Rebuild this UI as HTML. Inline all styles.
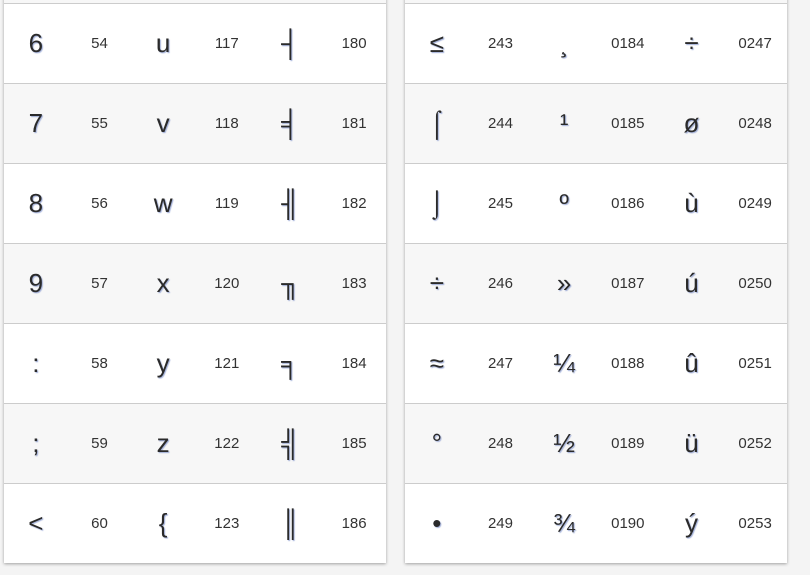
<!DOCTYPE html>
<html><head><style>
html,body{margin:0;padding:0;background:#f4f4f4;width:810px;height:575px;overflow:hidden;font-family:"Liberation Sans",Arial,sans-serif;}
.card{position:absolute;top:-77px;width:382px;background:#fff;box-shadow:0 1px 3px rgba(0,0,0,.35);}
.row{height:79px;border-top:1px solid #ccc;display:flex;}
.row:nth-child(odd){background:#f7f7f7;}
.c{width:63.66px;display:flex;align-items:center;justify-content:center;color:#333;}
.b{font-size:26px;color:#2a2a2a;text-shadow:1px 1px 1px rgba(120,140,200,.7);}
.n{font-size:15px;color:#333;}
</style></head><body>
<div class="card" style="left:4px">
<div class="row"></div>
<div class="row"><div class="c b">6</div><div class="c n">54</div><div class="c b">u</div><div class="c n">117</div><div class="c b">┤</div><div class="c n">180</div></div>
<div class="row"><div class="c b">7</div><div class="c n">55</div><div class="c b">v</div><div class="c n">118</div><div class="c b">╡</div><div class="c n">181</div></div>
<div class="row"><div class="c b">8</div><div class="c n">56</div><div class="c b">w</div><div class="c n">119</div><div class="c b">╢</div><div class="c n">182</div></div>
<div class="row"><div class="c b">9</div><div class="c n">57</div><div class="c b">x</div><div class="c n">120</div><div class="c b">╖</div><div class="c n">183</div></div>
<div class="row"><div class="c b">:</div><div class="c n">58</div><div class="c b">y</div><div class="c n">121</div><div class="c b">╕</div><div class="c n">184</div></div>
<div class="row"><div class="c b">;</div><div class="c n">59</div><div class="c b">z</div><div class="c n">122</div><div class="c b">╣</div><div class="c n">185</div></div>
<div class="row"><div class="c b">&lt;</div><div class="c n">60</div><div class="c b">{</div><div class="c n">123</div><div class="c b">║</div><div class="c n">186</div></div>
</div>
<div class="card" style="left:405px">
<div class="row"></div>
<div class="row"><div class="c b">≤</div><div class="c n">243</div><div class="c b">¸</div><div class="c n">0184</div><div class="c b">÷</div><div class="c n">0247</div></div>
<div class="row"><div class="c b">⌠</div><div class="c n">244</div><div class="c b">¹</div><div class="c n">0185</div><div class="c b">ø</div><div class="c n">0248</div></div>
<div class="row"><div class="c b">⌡</div><div class="c n">245</div><div class="c b">º</div><div class="c n">0186</div><div class="c b">ù</div><div class="c n">0249</div></div>
<div class="row"><div class="c b">÷</div><div class="c n">246</div><div class="c b">»</div><div class="c n">0187</div><div class="c b">ú</div><div class="c n">0250</div></div>
<div class="row"><div class="c b">≈</div><div class="c n">247</div><div class="c b">¼</div><div class="c n">0188</div><div class="c b">û</div><div class="c n">0251</div></div>
<div class="row"><div class="c b">°</div><div class="c n">248</div><div class="c b">½</div><div class="c n">0189</div><div class="c b">ü</div><div class="c n">0252</div></div>
<div class="row"><div class="c b">•</div><div class="c n">249</div><div class="c b">¾</div><div class="c n">0190</div><div class="c b">ý</div><div class="c n">0253</div></div>
</div>
</body></html>
